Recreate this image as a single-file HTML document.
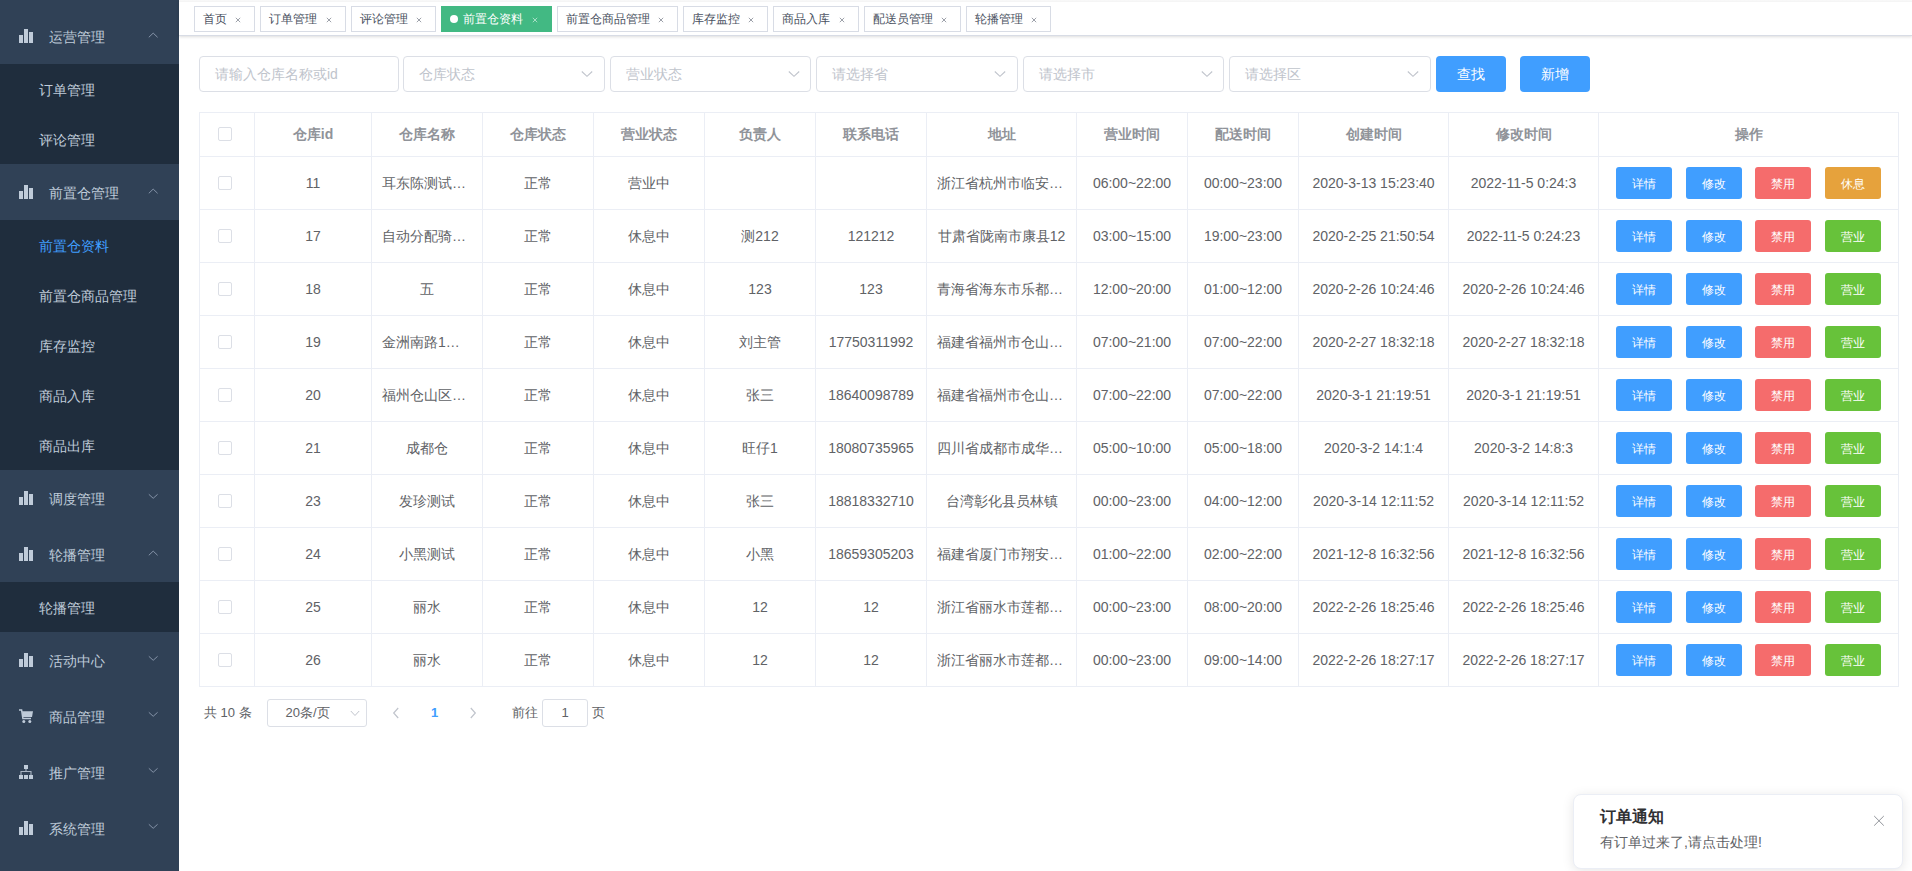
<!DOCTYPE html>
<html><head><meta charset="utf-8">
<style>
*{box-sizing:border-box;margin:0;padding:0}
html,body{width:1912px;height:871px;overflow:hidden;background:#fff;font-family:"Liberation Sans",sans-serif;}
#side{position:absolute;left:0;top:0;width:179px;height:871px;background:#304156;}
.mh{position:absolute;left:0;width:179px;height:56px;}
.mico{position:absolute;left:18px;top:20px;fill:#bfcbd9}
.mt{position:absolute;left:49px;top:1px;line-height:56px;font-size:14px;color:#bfcbd9;white-space:nowrap}
.arr{position:absolute;left:147px;top:24px;width:12px;height:8px}
.chev{display:block}
.sub{position:absolute;left:0;width:179px;background:#1f2d3d}
.mi{position:absolute;left:0;width:179px;height:50px;line-height:52px;padding-left:39px;font-size:14px;color:#bfcbd9;white-space:nowrap}
.mi.act{color:#409eff}
#tagbar{position:absolute;left:179px;top:0;width:1733px;height:36px;background:#fff;border-bottom:1px solid #d8dce5;box-shadow:0 1px 3px 0 rgba(0,0,0,.12),0 0 3px 0 rgba(0,0,0,.04);white-space:nowrap;font-size:0}
.tag{display:inline-block;position:relative;vertical-align:top;height:26px;line-height:25px;border:1px solid #d8dce5;color:#495060;background:#fff;padding:0 8px;font-size:12px;margin-left:5px;margin-top:6px}
.tag:first-child{margin-left:15px}
.tag.act{background:#42b983;color:#fff;border-color:#42b983}
.dot{display:inline-block;width:8px;height:8px;border-radius:50%;background:#fff;vertical-align:0px;margin-right:2px}
.tx{display:inline-block;vertical-align:-4px}
.inp{position:absolute;top:56px;height:36px;border:1px solid #dcdfe6;border-radius:4px;background:#fff}
.ph{position:absolute;left:15px;top:0;line-height:34px;font-size:14px;color:#c0c4cc;white-space:nowrap}
.selarr{position:absolute;right:9.5px;top:13px}
.btn{position:absolute;top:56px;width:70px;height:36px;border-radius:4px;background:#409eff;color:#fff;font-size:14px;text-align:center;line-height:36px}
.tbl{position:absolute;border-left:1px solid #ebeef5;border-top:1px solid #ebeef5}
.vl{position:absolute;width:1px;background:#ebeef5}
.hl{position:absolute;height:1px;background:#ebeef5}
.th{position:absolute;text-align:center;font-size:14px;font-weight:bold;color:#909399}
.td{position:absolute;text-align:center;font-size:14px;color:#606266}
.cell{padding:0 10px;white-space:nowrap;overflow:hidden;text-overflow:ellipsis}
.cb{position:absolute;width:14px;height:14px;border:1px solid #dcdfe6;border-radius:2px;background:#fff}
.sb{position:absolute;width:56px;height:32px;line-height:34px;border-radius:3px;color:#fff;font-size:12px;text-align:center}
.bp{background:#409eff} .bd{background:#f56c6c} .bw{background:#e6a23c} .bs{background:#67c23a}
#pag{position:absolute;left:199px;top:699px;height:28px;font-size:13px;color:#606266}
.notif{position:absolute;left:1573px;top:794px;width:330px;height:75px;border:1px solid #ebeef5;border-radius:8px;background:#fff;box-shadow:0 2px 12px 0 rgba(0,0,0,.1)}
</style></head><body>
<div id="side">
<div class="mh" style="top:8px"><svg class="mico" width="16" height="16" viewBox="0 0 16 16"><rect x="1" y="7" width="4" height="8"/><rect x="6" y="1" width="4" height="14"/><rect x="11" y="4" width="4" height="11"/></svg><span class="mt">运营管理</span><span class="arr"><svg class="chev" width="12" height="8" viewBox="0 0 12 8"><path d="M1.8 5.3 L6.2 1.1 L10.6 5.3" fill="none" stroke="#8593a8" stroke-width="1"/></svg></span></div><div class="sub" style="top:64px;height:100px"></div><div class="mi" style="top:64px">订单管理</div><div class="mi" style="top:114px">评论管理</div><div class="mh" style="top:164px"><svg class="mico" width="16" height="16" viewBox="0 0 16 16"><rect x="1" y="7" width="4" height="8"/><rect x="6" y="1" width="4" height="14"/><rect x="11" y="4" width="4" height="11"/></svg><span class="mt">前置仓管理</span><span class="arr"><svg class="chev" width="12" height="8" viewBox="0 0 12 8"><path d="M1.8 5.3 L6.2 1.1 L10.6 5.3" fill="none" stroke="#8593a8" stroke-width="1"/></svg></span></div><div class="sub" style="top:220px;height:250px"></div><div class="mi act" style="top:220px">前置仓资料</div><div class="mi" style="top:270px">前置仓商品管理</div><div class="mi" style="top:320px">库存监控</div><div class="mi" style="top:370px">商品入库</div><div class="mi" style="top:420px">商品出库</div><div class="mh" style="top:470px"><svg class="mico" width="16" height="16" viewBox="0 0 16 16"><rect x="1" y="7" width="4" height="8"/><rect x="6" y="1" width="4" height="14"/><rect x="11" y="4" width="4" height="11"/></svg><span class="mt">调度管理</span><span class="arr"><svg class="chev" width="12" height="8" viewBox="0 0 12 8" style="margin-top:-1px"><path d="M1.8 1.3 L6.2 5.3 L10.6 1.3" fill="none" stroke="#8593a8" stroke-width="1"/></svg></span></div><div class="mh" style="top:526px"><svg class="mico" width="16" height="16" viewBox="0 0 16 16"><rect x="1" y="7" width="4" height="8"/><rect x="6" y="1" width="4" height="14"/><rect x="11" y="4" width="4" height="11"/></svg><span class="mt">轮播管理</span><span class="arr"><svg class="chev" width="12" height="8" viewBox="0 0 12 8"><path d="M1.8 5.3 L6.2 1.1 L10.6 5.3" fill="none" stroke="#8593a8" stroke-width="1"/></svg></span></div><div class="sub" style="top:582px;height:50px"></div><div class="mi" style="top:582px">轮播管理</div><div class="mh" style="top:632px"><svg class="mico" width="16" height="16" viewBox="0 0 16 16"><rect x="1" y="7" width="4" height="8"/><rect x="6" y="1" width="4" height="14"/><rect x="11" y="4" width="4" height="11"/></svg><span class="mt">活动中心</span><span class="arr"><svg class="chev" width="12" height="8" viewBox="0 0 12 8" style="margin-top:-1px"><path d="M1.8 1.3 L6.2 5.3 L10.6 1.3" fill="none" stroke="#8593a8" stroke-width="1"/></svg></span></div><div class="mh" style="top:688px"><svg class="mico" width="16" height="16" viewBox="0 0 16 16"><path d="M1 2 H3.6 L4.9 10.6 H13" fill="none" stroke="#bfcbd9" stroke-width="1.5"/><path d="M4 3.2 H15 L14 9 H4.8 Z"/><circle cx="5.8" cy="13.4" r="1.5"/><circle cx="11.8" cy="13.4" r="1.5"/></svg><span class="mt">商品管理</span><span class="arr"><svg class="chev" width="12" height="8" viewBox="0 0 12 8" style="margin-top:-1px"><path d="M1.8 1.3 L6.2 5.3 L10.6 1.3" fill="none" stroke="#8593a8" stroke-width="1"/></svg></span></div><div class="mh" style="top:744px"><svg class="mico" width="16" height="16" viewBox="0 0 16 16"><rect x="6" y="1" width="4" height="4"/><path d="M8 5 V7.5 M3 11 V7.5 H13 V11" fill="none" stroke="#a9b5c4" stroke-width="1.1"/><rect x="1" y="11" width="4" height="4"/><rect x="6" y="11" width="4" height="4"/><rect x="11" y="11" width="4" height="4"/></svg><span class="mt">推广管理</span><span class="arr"><svg class="chev" width="12" height="8" viewBox="0 0 12 8" style="margin-top:-1px"><path d="M1.8 1.3 L6.2 5.3 L10.6 1.3" fill="none" stroke="#8593a8" stroke-width="1"/></svg></span></div><div class="mh" style="top:800px"><svg class="mico" width="16" height="16" viewBox="0 0 16 16"><rect x="1" y="7" width="4" height="8"/><rect x="6" y="1" width="4" height="14"/><rect x="11" y="4" width="4" height="11"/></svg><span class="mt">系统管理</span><span class="arr"><svg class="chev" width="12" height="8" viewBox="0 0 12 8" style="margin-top:-1px"><path d="M1.8 1.3 L6.2 5.3 L10.6 1.3" fill="none" stroke="#8593a8" stroke-width="1"/></svg></span></div>
</div>
<div id="tagbar"><span class="tag">首页 <svg width="16" height="16" viewBox="0 0 16 16" class="tx"><path d="M5.8 6.8 L10.2 11.2 M10.2 6.8 L5.8 11.2" stroke="currentColor" stroke-width="0.9" fill="none" opacity="0.6"/></svg></span><span class="tag">订单管理 <svg width="16" height="16" viewBox="0 0 16 16" class="tx"><path d="M5.8 6.8 L10.2 11.2 M10.2 6.8 L5.8 11.2" stroke="currentColor" stroke-width="0.9" fill="none" opacity="0.6"/></svg></span><span class="tag">评论管理 <svg width="16" height="16" viewBox="0 0 16 16" class="tx"><path d="M5.8 6.8 L10.2 11.2 M10.2 6.8 L5.8 11.2" stroke="currentColor" stroke-width="0.9" fill="none" opacity="0.6"/></svg></span><span class="tag act"><b class="dot"></b> 前置仓资料 <svg width="16" height="16" viewBox="0 0 16 16" class="tx"><path d="M5.8 6.8 L10.2 11.2 M10.2 6.8 L5.8 11.2" stroke="currentColor" stroke-width="0.9" fill="none" opacity="0.6"/></svg></span><span class="tag">前置仓商品管理 <svg width="16" height="16" viewBox="0 0 16 16" class="tx"><path d="M5.8 6.8 L10.2 11.2 M10.2 6.8 L5.8 11.2" stroke="currentColor" stroke-width="0.9" fill="none" opacity="0.6"/></svg></span><span class="tag">库存监控 <svg width="16" height="16" viewBox="0 0 16 16" class="tx"><path d="M5.8 6.8 L10.2 11.2 M10.2 6.8 L5.8 11.2" stroke="currentColor" stroke-width="0.9" fill="none" opacity="0.6"/></svg></span><span class="tag">商品入库 <svg width="16" height="16" viewBox="0 0 16 16" class="tx"><path d="M5.8 6.8 L10.2 11.2 M10.2 6.8 L5.8 11.2" stroke="currentColor" stroke-width="0.9" fill="none" opacity="0.6"/></svg></span><span class="tag">配送员管理 <svg width="16" height="16" viewBox="0 0 16 16" class="tx"><path d="M5.8 6.8 L10.2 11.2 M10.2 6.8 L5.8 11.2" stroke="currentColor" stroke-width="0.9" fill="none" opacity="0.6"/></svg></span><span class="tag">轮播管理 <svg width="16" height="16" viewBox="0 0 16 16" class="tx"><path d="M5.8 6.8 L10.2 11.2 M10.2 6.8 L5.8 11.2" stroke="currentColor" stroke-width="0.9" fill="none" opacity="0.6"/></svg></span></div>
<div style="position:absolute;left:179px;top:0;width:1733px;height:2px;background:linear-gradient(#fafafa,#f4f4f4 70%,#fbfbfb)"></div>
<div class="inp" style="left:199px;width:200px"><span class="ph">请输入仓库名称或id</span></div><div class="inp" style="left:403.4px;width:201.6px"><span class="ph">仓库状态</span><svg class="selarr" width="14" height="8" viewBox="0 0 14 8"><path d="M1.8 1.5 L7 6.3 L12.2 1.5" fill="none" stroke="#c0c4cc" stroke-width="1.1"/></svg></div><div class="inp" style="left:609.9px;width:201.6px"><span class="ph">营业状态</span><svg class="selarr" width="14" height="8" viewBox="0 0 14 8"><path d="M1.8 1.5 L7 6.3 L12.2 1.5" fill="none" stroke="#c0c4cc" stroke-width="1.1"/></svg></div><div class="inp" style="left:816.4px;width:201.6px"><span class="ph">请选择省</span><svg class="selarr" width="14" height="8" viewBox="0 0 14 8"><path d="M1.8 1.5 L7 6.3 L12.2 1.5" fill="none" stroke="#c0c4cc" stroke-width="1.1"/></svg></div><div class="inp" style="left:1022.9px;width:201.6px"><span class="ph">请选择市</span><svg class="selarr" width="14" height="8" viewBox="0 0 14 8"><path d="M1.8 1.5 L7 6.3 L12.2 1.5" fill="none" stroke="#c0c4cc" stroke-width="1.1"/></svg></div><div class="inp" style="left:1229.4px;width:201.6px"><span class="ph">请选择区</span><svg class="selarr" width="14" height="8" viewBox="0 0 14 8"><path d="M1.8 1.5 L7 6.3 L12.2 1.5" fill="none" stroke="#c0c4cc" stroke-width="1.1"/></svg></div><div class="btn" style="left:1436px">查找</div><div class="btn" style="left:1520px">新增</div>
<div class="tbl" style="left:199px;top:112px;width:1700px;height:575px"></div><div class="vl" style="left:254px;top:112px;height:575px"></div><div class="vl" style="left:371px;top:112px;height:575px"></div><div class="vl" style="left:482px;top:112px;height:575px"></div><div class="vl" style="left:593px;top:112px;height:575px"></div><div class="vl" style="left:704px;top:112px;height:575px"></div><div class="vl" style="left:815px;top:112px;height:575px"></div><div class="vl" style="left:926px;top:112px;height:575px"></div><div class="vl" style="left:1076px;top:112px;height:575px"></div><div class="vl" style="left:1187px;top:112px;height:575px"></div><div class="vl" style="left:1298px;top:112px;height:575px"></div><div class="vl" style="left:1448px;top:112px;height:575px"></div><div class="vl" style="left:1598px;top:112px;height:575px"></div><div class="vl" style="left:1898px;top:112px;height:575px"></div><div class="hl" style="left:199px;top:156px;width:1700px"></div><div class="hl" style="left:199px;top:209px;width:1700px"></div><div class="hl" style="left:199px;top:262px;width:1700px"></div><div class="hl" style="left:199px;top:315px;width:1700px"></div><div class="hl" style="left:199px;top:368px;width:1700px"></div><div class="hl" style="left:199px;top:421px;width:1700px"></div><div class="hl" style="left:199px;top:474px;width:1700px"></div><div class="hl" style="left:199px;top:527px;width:1700px"></div><div class="hl" style="left:199px;top:580px;width:1700px"></div><div class="hl" style="left:199px;top:633px;width:1700px"></div><div class="hl" style="left:199px;top:686px;width:1700px"></div><div class="cb" style="left:218px;top:127px"></div><div class="th" style="left:255px;top:113px;width:116px;height:43px;line-height:43px">仓库id</div><div class="th" style="left:372px;top:113px;width:110px;height:43px;line-height:43px">仓库名称</div><div class="th" style="left:483px;top:113px;width:110px;height:43px;line-height:43px">仓库状态</div><div class="th" style="left:594px;top:113px;width:110px;height:43px;line-height:43px">营业状态</div><div class="th" style="left:705px;top:113px;width:110px;height:43px;line-height:43px">负责人</div><div class="th" style="left:816px;top:113px;width:110px;height:43px;line-height:43px">联系电话</div><div class="th" style="left:927px;top:113px;width:149px;height:43px;line-height:43px">地址</div><div class="th" style="left:1077px;top:113px;width:110px;height:43px;line-height:43px">营业时间</div><div class="th" style="left:1188px;top:113px;width:110px;height:43px;line-height:43px">配送时间</div><div class="th" style="left:1299px;top:113px;width:149px;height:43px;line-height:43px">创建时间</div><div class="th" style="left:1449px;top:113px;width:149px;height:43px;line-height:43px">修改时间</div><div class="th" style="left:1599px;top:113px;width:299px;height:43px;line-height:43px">操作</div><div class="cb" style="left:218px;top:176px"></div><div class="td" style="left:255px;top:157px;width:116px;height:52px;line-height:52px"><div class="cell">11</div></div><div class="td" style="left:372px;top:157px;width:110px;height:52px;line-height:52px"><div class="cell">耳东陈测试仓库</div></div><div class="td" style="left:483px;top:157px;width:110px;height:52px;line-height:52px"><div class="cell">正常</div></div><div class="td" style="left:594px;top:157px;width:110px;height:52px;line-height:52px"><div class="cell">营业中</div></div><div class="td" style="left:705px;top:157px;width:110px;height:52px;line-height:52px"><div class="cell"></div></div><div class="td" style="left:816px;top:157px;width:110px;height:52px;line-height:52px"><div class="cell"></div></div><div class="td" style="left:927px;top:157px;width:149px;height:52px;line-height:52px"><div class="cell">浙江省杭州市临安区青山湖</div></div><div class="td" style="left:1077px;top:157px;width:110px;height:52px;line-height:52px"><div class="cell">06:00~22:00</div></div><div class="td" style="left:1188px;top:157px;width:110px;height:52px;line-height:52px"><div class="cell">00:00~23:00</div></div><div class="td" style="left:1299px;top:157px;width:149px;height:52px;line-height:52px"><div class="cell">2020-3-13 15:23:40</div></div><div class="td" style="left:1449px;top:157px;width:149px;height:52px;line-height:52px"><div class="cell">2022-11-5 0:24:3</div></div><div class="sb bp" style="left:1616.0px;top:167px">详情</div><div class="sb bp" style="left:1685.6px;top:167px">修改</div><div class="sb bd" style="left:1755.2px;top:167px">禁用</div><div class="sb bw" style="left:1824.8px;top:167px">休息</div><div class="cb" style="left:218px;top:229px"></div><div class="td" style="left:255px;top:210px;width:116px;height:52px;line-height:52px"><div class="cell">17</div></div><div class="td" style="left:372px;top:210px;width:110px;height:52px;line-height:52px"><div class="cell">自动分配骑手测试</div></div><div class="td" style="left:483px;top:210px;width:110px;height:52px;line-height:52px"><div class="cell">正常</div></div><div class="td" style="left:594px;top:210px;width:110px;height:52px;line-height:52px"><div class="cell">休息中</div></div><div class="td" style="left:705px;top:210px;width:110px;height:52px;line-height:52px"><div class="cell">测212</div></div><div class="td" style="left:816px;top:210px;width:110px;height:52px;line-height:52px"><div class="cell">121212</div></div><div class="td" style="left:927px;top:210px;width:149px;height:52px;line-height:52px"><div class="cell">甘肃省陇南市康县12</div></div><div class="td" style="left:1077px;top:210px;width:110px;height:52px;line-height:52px"><div class="cell">03:00~15:00</div></div><div class="td" style="left:1188px;top:210px;width:110px;height:52px;line-height:52px"><div class="cell">19:00~23:00</div></div><div class="td" style="left:1299px;top:210px;width:149px;height:52px;line-height:52px"><div class="cell">2020-2-25 21:50:54</div></div><div class="td" style="left:1449px;top:210px;width:149px;height:52px;line-height:52px"><div class="cell">2022-11-5 0:24:23</div></div><div class="sb bp" style="left:1616.0px;top:220px">详情</div><div class="sb bp" style="left:1685.6px;top:220px">修改</div><div class="sb bd" style="left:1755.2px;top:220px">禁用</div><div class="sb bs" style="left:1824.8px;top:220px">营业</div><div class="cb" style="left:218px;top:282px"></div><div class="td" style="left:255px;top:263px;width:116px;height:52px;line-height:52px"><div class="cell">18</div></div><div class="td" style="left:372px;top:263px;width:110px;height:52px;line-height:52px"><div class="cell">五</div></div><div class="td" style="left:483px;top:263px;width:110px;height:52px;line-height:52px"><div class="cell">正常</div></div><div class="td" style="left:594px;top:263px;width:110px;height:52px;line-height:52px"><div class="cell">休息中</div></div><div class="td" style="left:705px;top:263px;width:110px;height:52px;line-height:52px"><div class="cell">123</div></div><div class="td" style="left:816px;top:263px;width:110px;height:52px;line-height:52px"><div class="cell">123</div></div><div class="td" style="left:927px;top:263px;width:149px;height:52px;line-height:52px"><div class="cell">青海省海东市乐都区碾伯镇</div></div><div class="td" style="left:1077px;top:263px;width:110px;height:52px;line-height:52px"><div class="cell">12:00~20:00</div></div><div class="td" style="left:1188px;top:263px;width:110px;height:52px;line-height:52px"><div class="cell">01:00~12:00</div></div><div class="td" style="left:1299px;top:263px;width:149px;height:52px;line-height:52px"><div class="cell">2020-2-26 10:24:46</div></div><div class="td" style="left:1449px;top:263px;width:149px;height:52px;line-height:52px"><div class="cell">2020-2-26 10:24:46</div></div><div class="sb bp" style="left:1616.0px;top:273px">详情</div><div class="sb bp" style="left:1685.6px;top:273px">修改</div><div class="sb bd" style="left:1755.2px;top:273px">禁用</div><div class="sb bs" style="left:1824.8px;top:273px">营业</div><div class="cb" style="left:218px;top:335px"></div><div class="td" style="left:255px;top:316px;width:116px;height:52px;line-height:52px"><div class="cell">19</div></div><div class="td" style="left:372px;top:316px;width:110px;height:52px;line-height:52px"><div class="cell">金洲南路1号仓</div></div><div class="td" style="left:483px;top:316px;width:110px;height:52px;line-height:52px"><div class="cell">正常</div></div><div class="td" style="left:594px;top:316px;width:110px;height:52px;line-height:52px"><div class="cell">休息中</div></div><div class="td" style="left:705px;top:316px;width:110px;height:52px;line-height:52px"><div class="cell">刘主管</div></div><div class="td" style="left:816px;top:316px;width:110px;height:52px;line-height:52px"><div class="cell">17750311992</div></div><div class="td" style="left:927px;top:316px;width:149px;height:52px;line-height:52px"><div class="cell">福建省福州市仓山区金洲南路</div></div><div class="td" style="left:1077px;top:316px;width:110px;height:52px;line-height:52px"><div class="cell">07:00~21:00</div></div><div class="td" style="left:1188px;top:316px;width:110px;height:52px;line-height:52px"><div class="cell">07:00~22:00</div></div><div class="td" style="left:1299px;top:316px;width:149px;height:52px;line-height:52px"><div class="cell">2020-2-27 18:32:18</div></div><div class="td" style="left:1449px;top:316px;width:149px;height:52px;line-height:52px"><div class="cell">2020-2-27 18:32:18</div></div><div class="sb bp" style="left:1616.0px;top:326px">详情</div><div class="sb bp" style="left:1685.6px;top:326px">修改</div><div class="sb bd" style="left:1755.2px;top:326px">禁用</div><div class="sb bs" style="left:1824.8px;top:326px">营业</div><div class="cb" style="left:218px;top:388px"></div><div class="td" style="left:255px;top:369px;width:116px;height:52px;line-height:52px"><div class="cell">20</div></div><div class="td" style="left:372px;top:369px;width:110px;height:52px;line-height:52px"><div class="cell">福州仓山区仓库</div></div><div class="td" style="left:483px;top:369px;width:110px;height:52px;line-height:52px"><div class="cell">正常</div></div><div class="td" style="left:594px;top:369px;width:110px;height:52px;line-height:52px"><div class="cell">休息中</div></div><div class="td" style="left:705px;top:369px;width:110px;height:52px;line-height:52px"><div class="cell">张三</div></div><div class="td" style="left:816px;top:369px;width:110px;height:52px;line-height:52px"><div class="cell">18640098789</div></div><div class="td" style="left:927px;top:369px;width:149px;height:52px;line-height:52px"><div class="cell">福建省福州市仓山区建新镇</div></div><div class="td" style="left:1077px;top:369px;width:110px;height:52px;line-height:52px"><div class="cell">07:00~22:00</div></div><div class="td" style="left:1188px;top:369px;width:110px;height:52px;line-height:52px"><div class="cell">07:00~22:00</div></div><div class="td" style="left:1299px;top:369px;width:149px;height:52px;line-height:52px"><div class="cell">2020-3-1 21:19:51</div></div><div class="td" style="left:1449px;top:369px;width:149px;height:52px;line-height:52px"><div class="cell">2020-3-1 21:19:51</div></div><div class="sb bp" style="left:1616.0px;top:379px">详情</div><div class="sb bp" style="left:1685.6px;top:379px">修改</div><div class="sb bd" style="left:1755.2px;top:379px">禁用</div><div class="sb bs" style="left:1824.8px;top:379px">营业</div><div class="cb" style="left:218px;top:441px"></div><div class="td" style="left:255px;top:422px;width:116px;height:52px;line-height:52px"><div class="cell">21</div></div><div class="td" style="left:372px;top:422px;width:110px;height:52px;line-height:52px"><div class="cell">成都仓</div></div><div class="td" style="left:483px;top:422px;width:110px;height:52px;line-height:52px"><div class="cell">正常</div></div><div class="td" style="left:594px;top:422px;width:110px;height:52px;line-height:52px"><div class="cell">休息中</div></div><div class="td" style="left:705px;top:422px;width:110px;height:52px;line-height:52px"><div class="cell">旺仔1</div></div><div class="td" style="left:816px;top:422px;width:110px;height:52px;line-height:52px"><div class="cell">18080735965</div></div><div class="td" style="left:927px;top:422px;width:149px;height:52px;line-height:52px"><div class="cell">四川省成都市成华区万年场</div></div><div class="td" style="left:1077px;top:422px;width:110px;height:52px;line-height:52px"><div class="cell">05:00~10:00</div></div><div class="td" style="left:1188px;top:422px;width:110px;height:52px;line-height:52px"><div class="cell">05:00~18:00</div></div><div class="td" style="left:1299px;top:422px;width:149px;height:52px;line-height:52px"><div class="cell">2020-3-2 14:1:4</div></div><div class="td" style="left:1449px;top:422px;width:149px;height:52px;line-height:52px"><div class="cell">2020-3-2 14:8:3</div></div><div class="sb bp" style="left:1616.0px;top:432px">详情</div><div class="sb bp" style="left:1685.6px;top:432px">修改</div><div class="sb bd" style="left:1755.2px;top:432px">禁用</div><div class="sb bs" style="left:1824.8px;top:432px">营业</div><div class="cb" style="left:218px;top:494px"></div><div class="td" style="left:255px;top:475px;width:116px;height:52px;line-height:52px"><div class="cell">23</div></div><div class="td" style="left:372px;top:475px;width:110px;height:52px;line-height:52px"><div class="cell">发珍测试</div></div><div class="td" style="left:483px;top:475px;width:110px;height:52px;line-height:52px"><div class="cell">正常</div></div><div class="td" style="left:594px;top:475px;width:110px;height:52px;line-height:52px"><div class="cell">休息中</div></div><div class="td" style="left:705px;top:475px;width:110px;height:52px;line-height:52px"><div class="cell">张三</div></div><div class="td" style="left:816px;top:475px;width:110px;height:52px;line-height:52px"><div class="cell">18818332710</div></div><div class="td" style="left:927px;top:475px;width:149px;height:52px;line-height:52px"><div class="cell">台湾彰化县员林镇</div></div><div class="td" style="left:1077px;top:475px;width:110px;height:52px;line-height:52px"><div class="cell">00:00~23:00</div></div><div class="td" style="left:1188px;top:475px;width:110px;height:52px;line-height:52px"><div class="cell">04:00~12:00</div></div><div class="td" style="left:1299px;top:475px;width:149px;height:52px;line-height:52px"><div class="cell">2020-3-14 12:11:52</div></div><div class="td" style="left:1449px;top:475px;width:149px;height:52px;line-height:52px"><div class="cell">2020-3-14 12:11:52</div></div><div class="sb bp" style="left:1616.0px;top:485px">详情</div><div class="sb bp" style="left:1685.6px;top:485px">修改</div><div class="sb bd" style="left:1755.2px;top:485px">禁用</div><div class="sb bs" style="left:1824.8px;top:485px">营业</div><div class="cb" style="left:218px;top:547px"></div><div class="td" style="left:255px;top:528px;width:116px;height:52px;line-height:52px"><div class="cell">24</div></div><div class="td" style="left:372px;top:528px;width:110px;height:52px;line-height:52px"><div class="cell">小黑测试</div></div><div class="td" style="left:483px;top:528px;width:110px;height:52px;line-height:52px"><div class="cell">正常</div></div><div class="td" style="left:594px;top:528px;width:110px;height:52px;line-height:52px"><div class="cell">休息中</div></div><div class="td" style="left:705px;top:528px;width:110px;height:52px;line-height:52px"><div class="cell">小黑</div></div><div class="td" style="left:816px;top:528px;width:110px;height:52px;line-height:52px"><div class="cell">18659305203</div></div><div class="td" style="left:927px;top:528px;width:149px;height:52px;line-height:52px"><div class="cell">福建省厦门市翔安区新店镇</div></div><div class="td" style="left:1077px;top:528px;width:110px;height:52px;line-height:52px"><div class="cell">01:00~22:00</div></div><div class="td" style="left:1188px;top:528px;width:110px;height:52px;line-height:52px"><div class="cell">02:00~22:00</div></div><div class="td" style="left:1299px;top:528px;width:149px;height:52px;line-height:52px"><div class="cell">2021-12-8 16:32:56</div></div><div class="td" style="left:1449px;top:528px;width:149px;height:52px;line-height:52px"><div class="cell">2021-12-8 16:32:56</div></div><div class="sb bp" style="left:1616.0px;top:538px">详情</div><div class="sb bp" style="left:1685.6px;top:538px">修改</div><div class="sb bd" style="left:1755.2px;top:538px">禁用</div><div class="sb bs" style="left:1824.8px;top:538px">营业</div><div class="cb" style="left:218px;top:600px"></div><div class="td" style="left:255px;top:581px;width:116px;height:52px;line-height:52px"><div class="cell">25</div></div><div class="td" style="left:372px;top:581px;width:110px;height:52px;line-height:52px"><div class="cell">丽水</div></div><div class="td" style="left:483px;top:581px;width:110px;height:52px;line-height:52px"><div class="cell">正常</div></div><div class="td" style="left:594px;top:581px;width:110px;height:52px;line-height:52px"><div class="cell">休息中</div></div><div class="td" style="left:705px;top:581px;width:110px;height:52px;line-height:52px"><div class="cell">12</div></div><div class="td" style="left:816px;top:581px;width:110px;height:52px;line-height:52px"><div class="cell">12</div></div><div class="td" style="left:927px;top:581px;width:149px;height:52px;line-height:52px"><div class="cell">浙江省丽水市莲都区紫金街道</div></div><div class="td" style="left:1077px;top:581px;width:110px;height:52px;line-height:52px"><div class="cell">00:00~23:00</div></div><div class="td" style="left:1188px;top:581px;width:110px;height:52px;line-height:52px"><div class="cell">08:00~20:00</div></div><div class="td" style="left:1299px;top:581px;width:149px;height:52px;line-height:52px"><div class="cell">2022-2-26 18:25:46</div></div><div class="td" style="left:1449px;top:581px;width:149px;height:52px;line-height:52px"><div class="cell">2022-2-26 18:25:46</div></div><div class="sb bp" style="left:1616.0px;top:591px">详情</div><div class="sb bp" style="left:1685.6px;top:591px">修改</div><div class="sb bd" style="left:1755.2px;top:591px">禁用</div><div class="sb bs" style="left:1824.8px;top:591px">营业</div><div class="cb" style="left:218px;top:653px"></div><div class="td" style="left:255px;top:634px;width:116px;height:52px;line-height:52px"><div class="cell">26</div></div><div class="td" style="left:372px;top:634px;width:110px;height:52px;line-height:52px"><div class="cell">丽水</div></div><div class="td" style="left:483px;top:634px;width:110px;height:52px;line-height:52px"><div class="cell">正常</div></div><div class="td" style="left:594px;top:634px;width:110px;height:52px;line-height:52px"><div class="cell">休息中</div></div><div class="td" style="left:705px;top:634px;width:110px;height:52px;line-height:52px"><div class="cell">12</div></div><div class="td" style="left:816px;top:634px;width:110px;height:52px;line-height:52px"><div class="cell">12</div></div><div class="td" style="left:927px;top:634px;width:149px;height:52px;line-height:52px"><div class="cell">浙江省丽水市莲都区紫金街道</div></div><div class="td" style="left:1077px;top:634px;width:110px;height:52px;line-height:52px"><div class="cell">00:00~23:00</div></div><div class="td" style="left:1188px;top:634px;width:110px;height:52px;line-height:52px"><div class="cell">09:00~14:00</div></div><div class="td" style="left:1299px;top:634px;width:149px;height:52px;line-height:52px"><div class="cell">2022-2-26 18:27:17</div></div><div class="td" style="left:1449px;top:634px;width:149px;height:52px;line-height:52px"><div class="cell">2022-2-26 18:27:17</div></div><div class="sb bp" style="left:1616.0px;top:644px">详情</div><div class="sb bp" style="left:1685.6px;top:644px">修改</div><div class="sb bd" style="left:1755.2px;top:644px">禁用</div><div class="sb bs" style="left:1824.8px;top:644px">营业</div>
<div id="pagwrap">
<span style="position:absolute;left:204px;top:699px;line-height:28px;font-size:13px;color:#606266;white-space:nowrap">共 10 条</span>
<div style="position:absolute;left:267px;top:699px;width:100px;height:28px;border:1px solid #dcdfe6;border-radius:3px">
  <span style="position:absolute;left:17.5px;top:0;line-height:26px;font-size:13px;color:#606266;white-space:nowrap">20条/页</span>
  <svg style="position:absolute;left:82px;top:10px" width="10" height="7" viewBox="0 0 10 7"><path d="M0.8 1 L5 5.5 L9.2 1" fill="none" stroke="#c0c4cc" stroke-width="1"/></svg>
</div>
<svg style="position:absolute;left:391px;top:706px" width="10" height="14" viewBox="0 0 10 14"><path d="M7.2 2 L2.7 7 L7.2 12" fill="none" stroke="#c0c4cc" stroke-width="1.2"/></svg>
<span style="position:absolute;left:431px;top:699px;line-height:28px;font-size:13px;font-weight:bold;color:#409eff">1</span>
<svg style="position:absolute;left:468px;top:706px" width="10" height="14" viewBox="0 0 10 14"><path d="M2.8 2 L7.3 7 L2.8 12" fill="none" stroke="#c0c4cc" stroke-width="1.2"/></svg>
<span style="position:absolute;left:512px;top:699px;line-height:28px;font-size:13px;color:#606266;white-space:nowrap">前往</span>
<div style="position:absolute;left:542px;top:699px;width:46px;height:28px;border:1px solid #dcdfe6;border-radius:3px;text-align:center;line-height:26px;font-size:13px;color:#606266">1</div>
<span style="position:absolute;left:592px;top:699px;line-height:28px;font-size:13px;color:#606266">页</span>
</div>
<div class="notif">
  <div style="position:absolute;left:26px;top:10px;font-size:16px;font-weight:bold;color:#303133;line-height:24px;white-space:nowrap">订单通知</div>
  <div style="position:absolute;left:26px;top:37px;font-size:14px;color:#606266;line-height:21px;white-space:nowrap">有订单过来了,请点击处理!</div>
  <svg style="position:absolute;left:297px;top:18px" width="16" height="16" viewBox="0 0 16 16"><path d="M3.2 3 L12.8 12.6 M12.8 3 L3.2 12.6" stroke="#909399" stroke-width="1" fill="none"/></svg>
</div>
</body></html>
